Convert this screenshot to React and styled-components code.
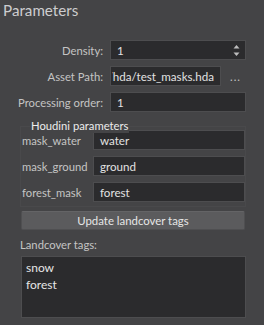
import React from "react";
import styled, { createGlobalStyle } from "styled-components";

const Global = createGlobalStyle`
  html, body { margin: 0; padding: 0; background: #444446; }
  body { font-family: "Lato", "Liberation Sans", sans-serif; font-size: 11.25px; color: #c4c4c4; }
  * { box-sizing: border-box; }
`;

const Panel = styled.div`
  width: 264px;
  height: 325px;
  background: #444446;
  display: flex;
  flex-direction: column;
  overflow: hidden;
`;

const Title = styled.div`
  font-size: 15.2px;
  line-height: 20px;
  height: 20px;
  padding-left: 3px;
  color: #cdcdcf;
`;

const Form = styled.div`
  display: flex;
  flex-direction: column;
  gap: 6px;
  padding-top: 20px;
`;

const Row = styled.div`
  display: flex;
  align-items: center;
  height: 20px;
  gap: ${(p) => p.$gap ?? 7}px;
`;

const Label = styled.div`
  flex: none;
  width: ${(p) => p.$w}px;
  text-align: ${(p) => p.$align || "right"};
  white-space: nowrap;
  color: #c4c4c4;
`;

const Field = styled.div`
  flex: none;
  width: ${(p) => p.$w}px;
  height: 100%;
  background: #2b2b2d;
  border: 1px solid #4d4d4f;
  display: flex;
  align-items: center;
  padding: 0 ${(p) => p.$pr ?? 4}px 0 ${(p) => p.$pl ?? 6}px;
  color: #e2e2e2;
  font-size: 11.6px;
  white-space: nowrap;
`;

const Clip = styled.div`
  flex: 1;
  overflow: hidden;
  display: flex;
  justify-content: flex-end;
`;

const Spin = styled.svg`
  margin-left: auto;
  display: block;
`;

const Ellipsis = styled.div`
  color: #c4c4c4;
  letter-spacing: 1px;
  padding-left: 2px;
`;

const Group = styled.div`
  position: relative;
  margin: 14px 18px 0 20px;
  border: 1px solid #49494b;
  padding: 3px 1px 4px 1px;
  display: flex;
  flex-direction: column;
  gap: 6px;
`;

const GroupTitle = styled.div`
  position: absolute;
  top: -8px;
  left: 9px;
  padding: 0 1px;
  line-height: 14px;
  background: #444446;
  color: #ececec;
`;

const Button = styled.button`
  margin: 4px 19px 0 21px;
  height: 19px;
  background: #5b5b5d;
  border: 1px solid #4f4f51;
  border-top-color: #646466;
  border-radius: 2px;
  color: #e6e6e6;
  font: inherit;
  font-size: 11.4px;
  padding: 0;
  line-height: 16px;
`;

const SectionLabel = styled.div`
  margin: 7px 0 0 20px;
  line-height: 16px;
  color: #c4c4c4;
`;

const TagBox = styled.div`
  margin: 3px 18px 0 21px;
  height: 62px;
  background: #2b2b2d;
  border: 1px solid #4d4d4f;
  padding: 2px 4px;
  color: #e6e6e6;
  font-size: 12px;
  line-height: 17px;
`;

export default function App() {
  return (
    <Panel>
      <Global />
      <Title>Parameters</Title>
      <Form>
        <Row>
          <Label $w={103}>Density:</Label>
          <Field $w={136} $pr={5}>
            1
            <Spin width="7" height="13" viewBox="0 0 7 13">
              <path d="M3.5 1 L6.5 4.5 L0.5 4.5 Z" fill="#bdbdbd" />
              <path d="M3.5 12 L6.5 8.5 L0.5 8.5 Z" fill="#bdbdbd" />
            </Spin>
          </Field>
        </Row>
        <Row>
          <Label $w={103}>Asset Path:</Label>
          <Field $w={111} $pr={6} $pl={1}>
            <Clip>/hda/test_masks.hda</Clip>
          </Field>
          <Ellipsis>...</Ellipsis>
        </Row>
        <Row>
          <Label $w={103}>Processing order:</Label>
          <Field $w={136}>1</Field>
        </Row>
      </Form>
      <Group>
        <GroupTitle>Houdini parameters</GroupTitle>
        <Row $gap={0}>
          <Label $w={71} $align="left">mask_water</Label>
          <Field $w={152}>water</Field>
        </Row>
        <Row $gap={0}>
          <Label $w={71} $align="left">mask_ground</Label>
          <Field $w={152}>ground</Field>
        </Row>
        <Row $gap={0}>
          <Label $w={71} $align="left">forest_mask</Label>
          <Field $w={152}>forest</Field>
        </Row>
      </Group>
      <Button>Update landcover tags</Button>
      <SectionLabel>Landcover tags:</SectionLabel>
      <TagBox>
        snow
        <br />
        forest
      </TagBox>
    </Panel>
  );
}
